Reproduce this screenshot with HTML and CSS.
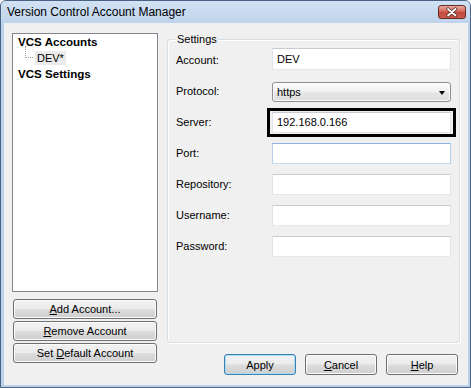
FILE: index.html
```html
<!DOCTYPE html>
<html>
<head>
<meta charset="utf-8">
<link rel="stylesheet" href="styles.css">
</head>
<body>
<div class="window">
  <div class="titlebar">
    <span class="title">Version Control Account Manager</span>
    <span class="close">
      <svg width="28" height="14" viewBox="0 0 28 14">
        <defs>
          <linearGradient id="cg" x1="0" y1="0" x2="0" y2="1">
            <stop offset="0" stop-color="#eab0a6"/>
            <stop offset="0.45" stop-color="#d46a5e"/>
            <stop offset="0.5" stop-color="#c44a3d"/>
            <stop offset="1" stop-color="#c85a48"/>
          </linearGradient>
        </defs>
        <rect x="0.5" y="0.5" width="27" height="13" rx="2.5" fill="url(#cg)" stroke="#6b2c26"/>
        <path d="M10 4 L17.5 10.5 M17.5 4 L10 10.5" stroke="#5a2a26" stroke-width="3.4" stroke-linecap="round"/>
        <path d="M10 4 L17.5 10.5 M17.5 4 L10 10.5" stroke="#ffffff" stroke-width="1.8" stroke-linecap="round"/>
      </svg>
    </span>
  </div>
  <div class="client">
    <div class="leftcol">
      <div class="tree">
        <div class="node root">VCS Accounts</div>
        <div class="node child"><span class="branch"></span><span class="selitem">DEV*</span></div>
        <div class="node root">VCS Settings</div>
      </div>
      <div class="leftbtns">
        <button class="btn"><u>A</u>dd Account...</button>
        <button class="btn"><u>R</u>emove Account</button>
        <button class="btn">Set <u>D</u>efault Account</button>
      </div>
    </div>
    <div class="rightcol">
      <fieldset class="group">
        <legend>Settings</legend>
        <div class="form">
          <label class="lbl">Account:</label>
          <div class="inp inp-account">DEV</div>
          <label class="lbl">Protocol:</label>
          <div class="combo"><span>https</span><span class="arrow"></span></div>
          <label class="lbl">Server:</label>
          <div class="mark"><div class="inp">192.168.0.166</div></div>
          <label class="lbl">Port:</label>
          <div class="inp inp-hover"></div>
          <label class="lbl">Repository:</label>
          <div class="inp"></div>
          <label class="lbl">Username:</label>
          <div class="inp"></div>
          <label class="lbl">Password:</label>
          <div class="inp"></div>
        </div>
      </fieldset>
      <div class="actions">
        <button class="btn wide default">Apply</button>
        <button class="btn wide"><u>C</u>ancel</button>
        <button class="btn wide"><u>H</u>elp</button>
      </div>
    </div>
  </div>
</div>
</body>
</html>
```

FILE: styles.css
```css
html, body {
  margin: 0;
  padding: 0;
}

body {
  font-family: "Liberation Sans", Arial, sans-serif;
  font-size: 11px;
  color: #000;
}

.window {
  width: 471px;
  height: 388px;
  box-sizing: border-box;
  border: 1px solid #4a6283;
  border-radius: 6px 6px 0 0;
  background: #b9d1ea;
  display: flex;
  flex-direction: column;
  overflow: hidden;
}

.titlebar {
  height: 22px;
  flex: none;
  display: flex;
  align-items: flex-start;
  background: linear-gradient(#d2e2f4, #bed3eb);
}

.title {
  padding: 1px 0 0 6px;
  font-size: 12px;
  line-height: 21px;
  color: #000;
}

.close {
  margin: 4px 4px 0 auto;
  height: 14px;
  display: block;
}

.close svg {
  display: block;
}

.client {
  flex: 1;
  margin: 0 2px 2px 3px;
  background: #f0f0f0;
  display: flex;
  gap: 9px;
  padding: 10px 8px 0 8px;
}

.leftcol {
  width: 146px;
  display: flex;
  flex-direction: column;
}

.tree {
  height: 259px;
  box-sizing: border-box;
  border: 1px solid #828790;
  background: #fff;
  padding: 0 0 0 5px;
}

.node {
  height: 16px;
  line-height: 16px;
  white-space: nowrap;
}

.root {
  font-weight: bold;
  font-size: 11.6px;
}

.child {
  display: flex;
  align-items: flex-start;
  padding-left: 7px;
}

.branch {
  width: 7px;
  height: 11px;
  margin-top: -4px;
  border-left: 1px dotted #a0a0a0;
  border-bottom: 1px dotted #a0a0a0;
}

.selitem {
  margin: 1px 0 0 2px;
  padding: 0 2px;
  height: 14px;
  line-height: 14px;
  background: #ebebeb;
}

.leftbtns {
  margin: 7px 1px 0 1px;
  display: flex;
  flex-direction: column;
  gap: 2px;
}

.btn {
  height: 20px;
  box-sizing: border-box;
  border: 1px solid #707070;
  border-radius: 3px;
  background: linear-gradient(#f2f2f2, #ebebeb 48%, #dddddd 52%, #cfcfcf);
  box-shadow: inset 0 0 0 1px #fbfbfb;
  font-family: "Liberation Sans", Arial, sans-serif;
  font-size: 11px;
  color: #000;
  padding: 0;
  margin: 0;
}

.rightcol {
  width: 293px;
  display: flex;
  flex-direction: column;
}

.group {
  margin: 0;
  height: 310px;
  box-sizing: border-box;
  padding: 4px 8px 0 8px;
  border: 1px solid #d5dfe5;
  border-radius: 3px;
  min-width: 0;
  box-shadow: inset 1px 1px 0 #fff, 1px 1px 0 #fff;
}

.group legend {
  padding: 0 1px;
  font-size: 11px;
  line-height: 13px;
  background: #f0f0f0;
}

.form {
  display: grid;
  grid-template-columns: 96px 179px;
  grid-auto-rows: 21px;
  row-gap: 10px;
  align-items: start;
}

.lbl {
  line-height: 21px;
  white-space: nowrap;
}

.inp {
  height: 21px;
  box-sizing: border-box;
  border: 1px solid;
  border-color: #c9cbd0 #e2e3ea #e3e9ef #e2e3ea;
  background: #fff;
  padding: 0 4px;
  line-height: 19px;
  white-space: nowrap;
}

.inp-account {
  height: 22px;
  margin-top: -2px;
  line-height: 20px;
}

.inp-hover {
  border-color: #8fb3db #b7d1ec #c9dcef #b7d1ec;
}

.combo {
  margin-top: 1px;
  height: 20px;
  box-sizing: border-box;
  border: 1px solid #8e8f8f;
  border-radius: 3px;
  background: linear-gradient(#fbfbfb, #f1f1f1 48%, #e6e6e6 52%, #dedede);
  box-shadow: inset 0 0 0 1px #fcfcfc;
  display: flex;
  align-items: center;
  justify-content: space-between;
  padding: 0 5px 0 4px;
}

.arrow {
  width: 0;
  height: 0;
  border-top: 4px solid #000;
  border-left: 3.5px solid transparent;
  border-right: 3.5px solid transparent;
  margin-top: 1px;
}

.mark {
  margin: -4px -5px 0 -5px;
  border: 3px solid #000;
  padding: 1px 2px;
}

.actions {
  margin-top: 11px;
  display: flex;
  justify-content: flex-end;
  gap: 9px;
  padding-right: 2px;
}

.wide {
  width: 72px;
  height: 21px;
}

.default {
  border-color: #3c7fb1;
  box-shadow: inset 0 0 0 1px #a9dcf5;
}
```
